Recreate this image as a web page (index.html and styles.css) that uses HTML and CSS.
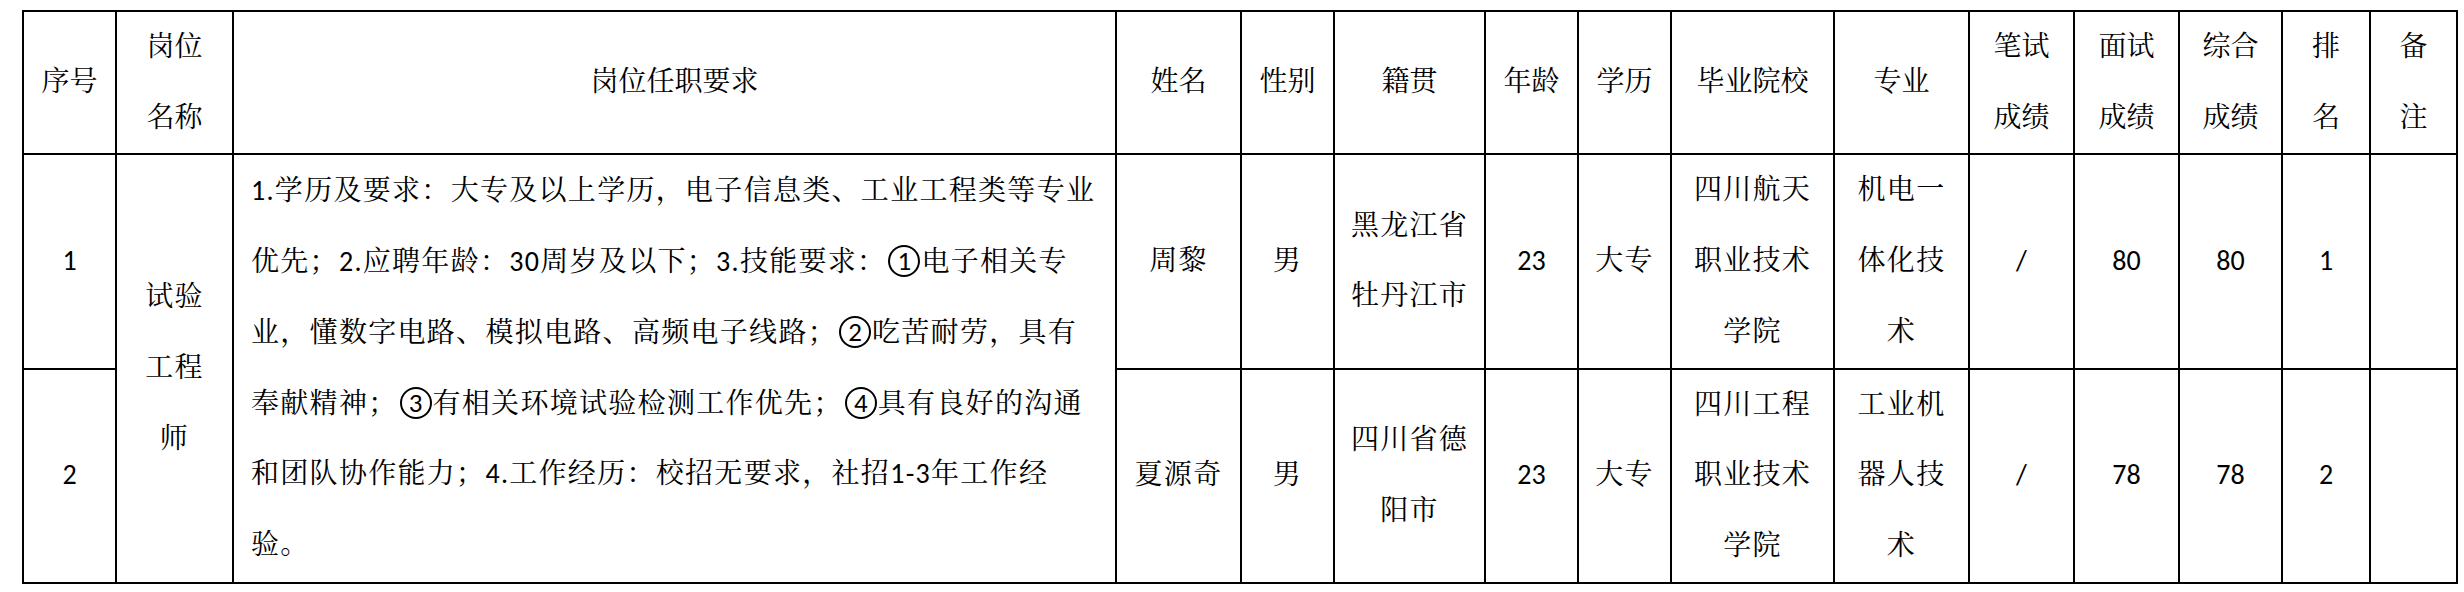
FILE: index.html
```html
<!DOCTYPE html>
<html lang="zh-CN">
<head>
<meta charset="utf-8">
<title>岗位任职要求</title>
<link rel="stylesheet" href="styles.css">
</head>
<body>
<div class="sheet">
<table class="grid">
  <colgroup>
    <col class="w-no"><col class="w-post"><col class="w-req"><col class="w-name"><col class="w-sex">
    <col class="w-origin"><col class="w-age"><col class="w-edu"><col class="w-school"><col class="w-major">
    <col class="w-written"><col class="w-interview"><col class="w-total"><col class="w-rank"><col class="w-note">
  </colgroup>
  <tr class="head-row">
    <th>序号</th>
    <th>岗位<br>名称</th>
    <th>岗位任职要求</th>
    <th>姓名</th>
    <th>性别</th>
    <th>籍贯</th>
    <th>年龄</th>
    <th>学历</th>
    <th>毕业院校</th>
    <th>专业</th>
    <th>笔试<br>成绩</th>
    <th>面试<br>成绩</th>
    <th>综合<br>成绩</th>
    <th>排<br>名</th>
    <th>备<br>注</th>
  </tr>
  <tr class="body-row">
    <td>1</td>
    <td rowspan="2" class="spaced">试验<br>工程<br>师</td>
    <td rowspan="2" class="req spaced">1.学历及要求：大专及以上学历，电子信息类、工业工程类等专业<br>优先；2.应聘年龄：30周岁及以下；3.技能要求：<span class="circ">1</span>电子相关专<br>业，懂数字电路、模拟电路、高频电子线路；<span class="circ">2</span>吃苦耐劳，具有<br>奉献精神；<span class="circ">3</span>有相关环境试验检测工作优先；<span class="circ">4</span>具有良好的沟通<br>和团队协作能力；4.工作经历：校招无要求，社招1-3年工作经<br>验。</td>
    <td class="spaced">周黎</td>
    <td class="spaced">男</td>
    <td class="spaced">黑龙江省<br>牡丹江市</td>
    <td>23</td>
    <td class="spaced">大专</td>
    <td class="spaced">四川航天<br>职业技术<br>学院</td>
    <td class="spaced">机电一<br>体化技<br>术</td>
    <td>/</td>
    <td>80</td>
    <td>80</td>
    <td>1</td>
    <td></td>
  </tr>
  <tr class="body-row">
    <td>2</td>
    <td class="spaced">夏源奇</td>
    <td class="spaced">男</td>
    <td class="spaced">四川省德<br>阳市</td>
    <td>23</td>
    <td class="spaced">大专</td>
    <td class="spaced">四川工程<br>职业技术<br>学院</td>
    <td class="spaced">工业机<br>器人技<br>术</td>
    <td>/</td>
    <td>78</td>
    <td>78</td>
    <td>2</td>
    <td></td>
  </tr>
</table>
</div>
</body>
</html>
```

FILE: styles.css
```css
html, body {
  margin: 0;
  padding: 0;
  background: #ffffff;
}

.sheet {
  padding: 10px 0 0 22px;
}

.grid {
  border-collapse: collapse;
  table-layout: fixed;
  width: 2434px;
  font-family: Carlito, Lato, "Noto Serif CJK SC", "Noto Sans CJK SC", serif;
  font-size: 28px;
  line-height: 70.7px;
  color: #000000;
}

.grid th,
.grid td {
  border: 2px solid #000000;
  padding: 0;
  text-align: center;
  vertical-align: middle;
  font-weight: normal;
  white-space: nowrap;
}

.head-row { height: 143px; }
.body-row { height: 214px; }

.spaced { letter-spacing: 1.3px; }

.grid td.req {
  text-align: left;
  padding-left: 17px;
}

.circ {
  display: inline-block;
  box-sizing: border-box;
  width: 32px;
  height: 32px;
  margin: 0 1px 0 2px;
  border: 2px solid #000000;
  border-radius: 50%;
  overflow: hidden;
  font-size: 27px;
  line-height: 28px;
  letter-spacing: 0;
  text-align: center;
  vertical-align: -6px;
}

.w-no { width: 93px; }
.w-post { width: 117px; }
.w-req { width: 883px; }
.w-name { width: 125px; }
.w-sex { width: 93px; }
.w-origin { width: 151px; }
.w-age { width: 93px; }
.w-edu { width: 93px; }
.w-school { width: 163px; }
.w-major { width: 135px; }
.w-written { width: 105px; }
.w-interview { width: 105px; }
.w-total { width: 103px; }
.w-rank { width: 88px; }
.w-note { width: 87px; }
```
